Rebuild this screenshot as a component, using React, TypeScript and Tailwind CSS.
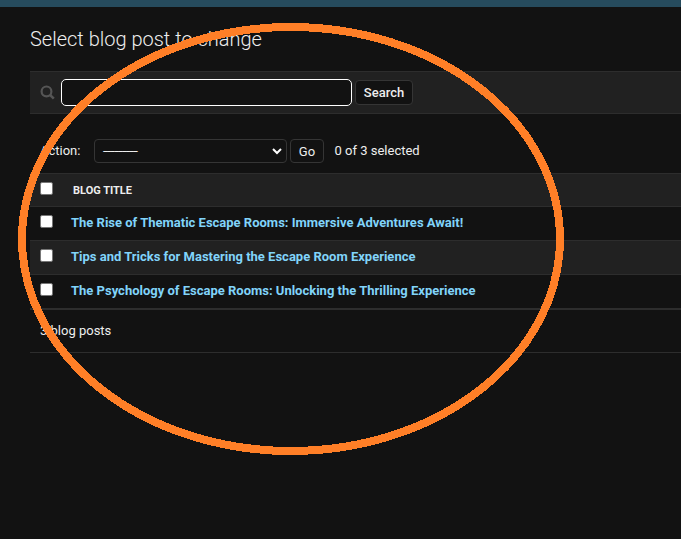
import React from 'react';

const posts = [
  'The Rise of Thematic Escape Rooms: Immersive Adventures Await!',
  'Tips and Tricks for Mastering the Escape Room Experience',
  'The Psychology of Escape Rooms: Unlocking the Thrilling Experience',
];

function Checkbox({ label }: { label: string }) {
  return (
    <input
      type="checkbox"
      aria-label={label}
      className="h-[13px] w-[13px] shrink-0 appearance-none rounded-[2px] border border-[#767676] bg-white"
    />
  );
}

export default function App() {
  return (
    <div className="relative h-[539px] w-[681px] overflow-hidden bg-[#121212] font-['Roboto',sans-serif] text-[13px] text-[#eeeeee]">
      <div className="h-[7px] bg-[#264b5d]" />
      <main className="pl-[30px]">
        <h1 className="h-16 pt-5 text-[20px] leading-6 font-light text-[#eeeeee]">
          Select blog post to change
        </h1>

        <form className="flex h-[43px] items-center border-y border-[#2d2d2d] bg-[#212121] pl-[10px]">
          <svg width="15" height="15" viewBox="0 0 15 15" fill="none" stroke="#555555" className="shrink-0">
            <circle cx="6.5" cy="6.4" r="4.9" strokeWidth="2.2" />
            <path d="M10 9.9 L13.8 13.7" strokeWidth="2.6" />
          </svg>
          <input
            type="text"
            aria-label="Search blog posts"
            className="ml-[6px] h-[27px] w-[291px] rounded-[5px] border border-white bg-[#121212] outline-none"
          />
          <button
            type="button"
            className="ml-[3px] h-[25px] w-[58px] rounded-[4px] border border-[#353535] bg-[#121212] text-[13px] leading-4 font-medium"
          >
            Search
          </button>
        </form>

        <div className="flex h-[59px] items-center pt-[15px] pl-[10px]">
          <label className="w-[54px]">Action:</label>
          <div className="flex h-6 w-[193px] items-center justify-between rounded-[4px] border border-[#353535] pr-1 pl-2">
            <span className="tracking-[0.2px] [text-shadow:1px_0_0_#eeeeee]">---------</span>
            <svg width="10" height="7" viewBox="0 0 10 7" fill="none" stroke="#ffffff" strokeWidth="2">
              <path d="M1 1 L5 5 L9 1" />
            </svg>
          </div>
          <button
            type="button"
            className="ml-[3px] h-6 w-[34px] rounded-[4px] border border-[#353535] pt-px leading-4"
          >
            Go
          </button>
          <span className="ml-[10.5px]">0 of 3 selected</span>
        </div>

        <div className="border-b border-[#2d2d2d]">
          <div className="flex h-[34px] items-center border-y border-[#2d2d2d] bg-[#212121] pb-[3px] pl-[10px]">
            <Checkbox label="Select all" />
            <span className="mt-[4px] ml-[20px] text-[11px] leading-4 font-bold">BLOG TITLE</span>
          </div>
          {posts.map((post) => (
            <div
              key={post}
              className="flex h-[34px] items-center border-b border-[#2d2d2d] pb-1 pl-[10px] odd:bg-[#212121] even:bg-[#121212]"
            >
              <Checkbox label={post} />
              <a className="mt-[3px] ml-[18px] font-bold text-[#81d4fa]">{post}</a>
            </div>
          ))}
        </div>
        <p className="h-[43px] border-b border-[#2d2d2d] pt-[11px] pl-[10px] leading-5">3 blog posts</p>
      </main>

      <svg
        className="pointer-events-none absolute inset-0"
        width="681"
        height="539"
        viewBox="0 0 681 539"
        fill="none"
        shapeRendering="crispEdges"
      >
        <ellipse cx="291" cy="239" rx="269" ry="212" stroke="#ff7f27" strokeWidth="8" />
      </svg>
    </div>
  );
}
